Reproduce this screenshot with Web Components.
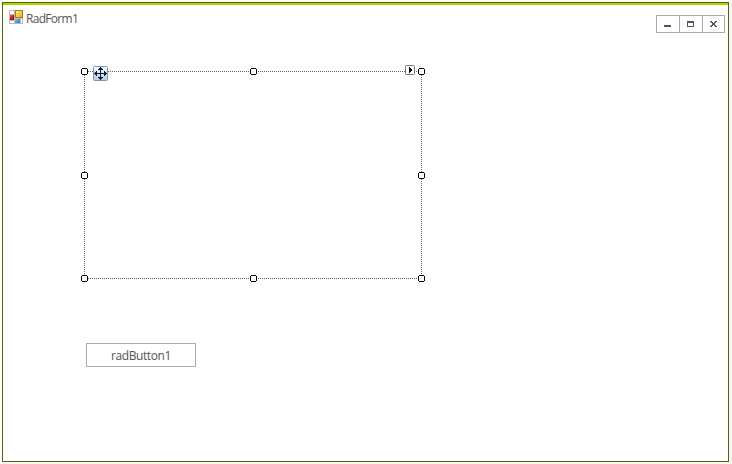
<!DOCTYPE html>
<html lang="en"><head><meta charset="utf-8"><title>RadForm1</title>
<style>html,body{margin:0;height:100%;overflow:hidden;background:#f5f5f5}body{font:12px "Open Sans","Noto Sans",sans-serif;color:#555}</style></head>
<body>
<rad-form>
  <title-bar slot="title" caption="RadForm1"></title-bar>
  <selection-frame></selection-frame>
  <rad-button>radButton1</rad-button>
</rad-form>
<script>
const define = (name, html, setup) => customElements.define(name, class extends HTMLElement {
  connectedCallback() {
    if (this.shadowRoot) return;
    this.attachShadow({mode: 'open'}).innerHTML = html;
    if (setup) setup(this);
  }
});

define('rad-form', `<style>
:host{display:block;box-sizing:border-box;height:464px;padding:2px 3px 2px 2px;background:linear-gradient(#fff,#fff) 0 0/2px 100% no-repeat,linear-gradient(#fff,#fff) 0 0/100% 2px no-repeat,#f5f5f5}
.window{box-sizing:border-box;height:460px;border:1px solid #4e6700;background:#fff;display:flex;flex-direction:column}
.accent{height:2px;flex:none;background:#aad400}
.canvas{position:relative;flex:1}
</style><div class="window"><div class="accent"></div><slot name="title"></slot><div class="canvas"><slot></slot></div></div>`);

define('form-icon', `<style>:host{display:block;width:14px;height:14px}svg{display:block}</style>
<svg width="14" height="14" shape-rendering="crispEdges"><defs>
<linearGradient id="y" x2="1" y2="1"><stop stop-color="#ffeb8c"/><stop offset="1" stop-color="#f0ae08"/></linearGradient>
<linearGradient id="b" x2="1" y2="1"><stop stop-color="#94bfff"/><stop offset="1" stop-color="#286be0"/></linearGradient></defs>
<path fill="#bcbcbc" d="M0 0h14v14H0z"/>
<path fill="#fff" d="M1 1h4v3H1zM1 11h4v2H1zM12 9h1v4h-1z"/>
<path fill="#9c1708" d="M1 5h4v5H1z"/><path fill="#e9482f" d="M1 5h3v3H1z"/><path fill="#c52a18" d="M2 6h2v3H2z"/>
<path fill="#b57b10" d="M6 0h8v8H6z"/><path fill="url(#y)" d="M7 1h6v6H7z"/>
<path fill="url(#b)" d="M6 9h5v4H6z"/></svg>`);

define('window-button', `<style>
:host{display:block;box-sizing:border-box;width:24px;height:18px;border:1px solid #ababab}
:host(:not(:first-child)){margin-left:-1px}svg{display:block}path{fill:#555}</style><svg width="22" height="16" shape-rendering="crispEdges"></svg>`, el => {
  const glyphs = {
    min: '<path d="M7 9h7v2H7z"/>',
    max: '<path fill-rule="evenodd" d="M7 5h7v6H7zM8 7v3h5V7z"/>',
    close: '<path d="M7 5h2v1h1v1h1V6h1V5h2v1h-1v1h-1v2h1v1h1v1h-2v-1h-1V9h-1v1H9v1H7v-1h1V9h1V7H8V6H7z"/>'
  };
  el.shadowRoot.querySelector('svg').innerHTML = glyphs[el.getAttribute('kind')];
});

define('title-bar', `<style>
:host{display:flex;height:35px;box-sizing:border-box;padding:5px 3px 0 6px;align-items:flex-start}
.caption{margin-left:3px;line-height:17px;flex:1;letter-spacing:-.7px}
.buttons{display:flex;margin-top:5px}
.buttons window-button:last-child{width:23px}
</style><form-icon></form-icon><span class="caption"></span><div class="buttons"><window-button kind="min"></window-button><window-button kind="max"></window-button><window-button kind="close"></window-button></div>`, el => {
  el.shadowRoot.querySelector('.caption').textContent = el.getAttribute('caption');
});

define('resize-handle', `<style>:host{position:absolute;width:7px;height:7px}svg{display:block}</style>
<svg width="7" height="7" shape-rendering="crispEdges"><path d="M1 1h5v5H1z" fill="#fff"/><path d="M1 0h5v1H1zM1 6h5v1H1zM0 1h1v5H0zM6 1h1v5H6z"/></svg>`);

define('selection-frame', `<style>
:host{position:absolute;left:81px;top:31px;width:338px;height:208px;
--h:repeating-linear-gradient(90deg,#666 0 1px,#fff 1px 2px);--v:repeating-linear-gradient(#666 0 1px,#fff 1px 2px);
background:var(--h) 0 0/100% 1px no-repeat,var(--h) 0 100%/100% 1px no-repeat,var(--v) 0 0/1px 100% no-repeat,var(--v) 100% 0/1px 100% no-repeat}
svg{position:absolute;display:block}.move{left:9px;top:-5px}.tag{left:321px;top:-6px}
</style><div id="handles"></div>
<svg class="move" width="15" height="15"><defs><linearGradient id="g" x2="0" y2="1"><stop stop-color="#fafcff"/><stop offset="1" stop-color="#b4c8e8"/></linearGradient></defs>
<rect x=".5" y=".5" width="14" height="14" rx="1" fill="url(#g)" stroke="#8494ae"/>
<path shape-rendering="crispEdges" fill="#111d35" d="M7 1h1v1h1v1h1v1H8v3h3V5h1v1h1v1h1v1h-1v1h-1v1h-1V8H8v3h2v1H9v1H8v1H7v-1H6v-1H5v-1h2V8H4v2H3V9H2V8H1V7h1V6h1V5h1v2h3V4H5V3h1V2h1z"/></svg>
<svg class="tag" width="10" height="10"><rect x=".5" y=".5" width="9" height="9" rx="1" fill="#fff" stroke="#77736a"/><path shape-rendering="crispEdges" d="M4 2h1v1h1v1h1v2H6v1H5v1H4z"/></svg>`, el => {
  for (const [x, y] of [[0,0],[169,0],[337,0],[0,104],[337,104],[0,207],[169,207],[337,207]]) {
    const h = document.createElement('resize-handle');
    h.style.left = x - 3 + 'px'; h.style.top = y - 3 + 'px';
    el.shadowRoot.getElementById('handles').append(h);
  }
});

define('rad-button', `<style>
:host{position:absolute;left:83px;top:303px;width:110px;height:24px;box-sizing:border-box;border:1px solid #ababab;background:#fff;display:flex;align-items:center;justify-content:center;line-height:22px;padding-top:2px;letter-spacing:-.42px}
</style><slot></slot>`);
</script>
</body></html>
